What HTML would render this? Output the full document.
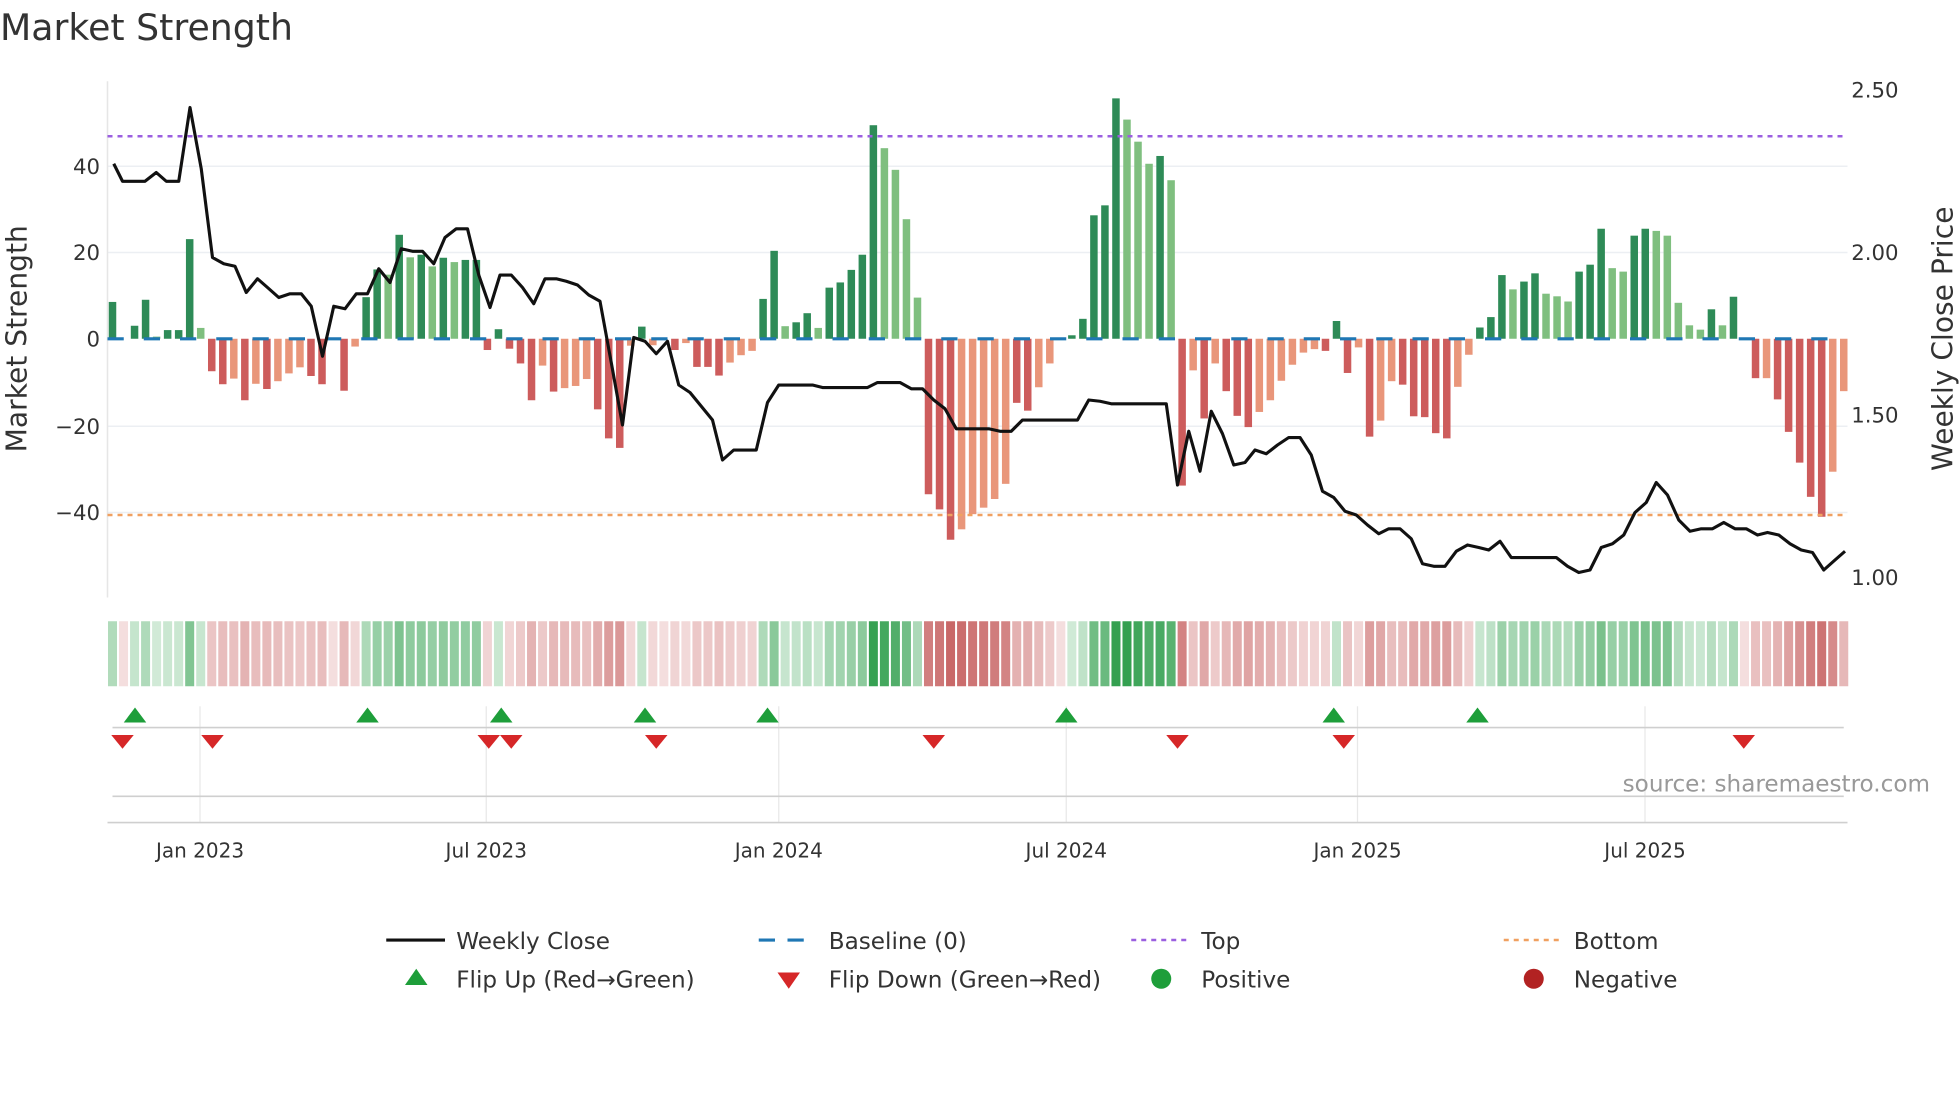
<!DOCTYPE html>
<html><head><meta charset="utf-8"><style>
html,body{margin:0;padding:0;background:#fff;}
svg{display:block;font-family:"DejaVu Sans","Liberation Sans",sans-serif;}
</style></head><body>
<svg id="s" width="1960" height="1102" viewBox="0 0 1568 881.6" xmlns="http://www.w3.org/2000/svg">
<rect width="1568" height="881.6" fill="#fff"/>
<text x="0" y="32" font-size="29" fill="#333">Market Strength</text>
<g stroke="#eceff3" stroke-width="1.2">
<line x1="86" x2="1478" y1="133" y2="133"/><line x1="86" x2="1478" y1="202" y2="202"/>
<line x1="86" x2="1478" y1="341" y2="341"/><line x1="86" x2="1478" y1="410" y2="410"/>
</g>
<line x1="86" x2="86" y1="65" y2="478" stroke="#e6e6e6" stroke-width="1.2"/>
<g font-size="17" fill="#333" text-anchor="end">
<text x="80" y="139">40</text><text x="80" y="208">20</text><text x="80" y="277">0</text>
<text x="80" y="347">−20</text><text x="80" y="416">−40</text>
</g>
<g font-size="17" fill="#333">
<text x="1481" y="78">2.50</text><text x="1481" y="208">2.00</text><text x="1481" y="338">1.50</text><text x="1481" y="468">1.00</text>
</g>
<text transform="translate(21,271) rotate(-90)" font-size="22.5" fill="#333" text-anchor="middle">Market Strength</text>
<text transform="translate(1562,271) rotate(-90)" font-size="22.5" fill="#333" text-anchor="middle">Weekly Close Price</text>
<g id="bars"></g>
<line x1="86" x2="1478" y1="109" y2="109" stroke="#9b5fe0" stroke-width="2" stroke-dasharray="4,4"/>
<line x1="86" x2="1478" y1="412" y2="412" stroke="#f0a060" stroke-width="2" stroke-dasharray="4,4"/>
<line x1="86" x2="1478" y1="271" y2="271" stroke="#1f77b4" stroke-width="2.5" stroke-dasharray="13,16"/>
<polyline id="price" fill="none" stroke="#111" stroke-width="2.5" stroke-linejoin="round"/>
<g id="heat"></g>
<g stroke="#e8e8e8" stroke-width="1">
<line x1="160" x2="160" y1="565" y2="658"/><line x1="389" x2="389" y1="565" y2="658"/>
<line x1="623" x2="623" y1="565" y2="658"/><line x1="853" x2="853" y1="565" y2="658"/>
<line x1="1086" x2="1086" y1="565" y2="658"/><line x1="1316" x2="1316" y1="565" y2="658"/>
</g>
<line x1="90" x2="1475" y1="582" y2="582" stroke="#cfcfcf" stroke-width="1.3"/>
<line x1="90" x2="1475" y1="637" y2="637" stroke="#cfcfcf" stroke-width="1.3"/>
<line x1="86" x2="1478" y1="658" y2="658" stroke="#cfcfcf" stroke-width="1.3"/>
<g id="flips"></g>
<text x="1544" y="633" font-size="18.5" fill="#999" text-anchor="end">source: sharemaestro.com</text>
<g font-size="16" fill="#333" text-anchor="middle">
<text x="160" y="686">Jan 2023</text><text x="389" y="686">Jul 2023</text><text x="623" y="686">Jan 2024</text>
<text x="853" y="686">Jul 2024</text><text x="1086" y="686">Jan 2025</text><text x="1316" y="686">Jul 2025</text>
</g>
<g font-size="18.5" fill="#333">
<line x1="309" x2="356" y1="752" y2="752" stroke="#111" stroke-width="2.5"/>
<text x="365" y="759">Weekly Close</text>
<line x1="607" x2="652" y1="752" y2="752" stroke="#1f77b4" stroke-width="2.5" stroke-dasharray="13,10"/>
<text x="663" y="759">Baseline (0)</text>
<line x1="905" x2="950" y1="752" y2="752" stroke="#9b5fe0" stroke-width="2" stroke-dasharray="4,4"/>
<text x="961" y="759">Top</text>
<line x1="1203" x2="1248" y1="752" y2="752" stroke="#f0a060" stroke-width="2" stroke-dasharray="4,4"/>
<text x="1259" y="759">Bottom</text>
<polygon points="324,788 342,788 333,775" fill="#1e9e3a"/>
<text x="365" y="790">Flip Up (Red→Green)</text>
<polygon points="622,778 640,778 631,791" fill="#d62728"/>
<text x="663" y="790">Flip Down (Green→Red)</text>
<circle cx="929" cy="783" r="8" fill="#1e9e3a"/>
<text x="961" y="790">Positive</text>
<circle cx="1227" cy="783" r="8" fill="#b22222"/>
<text x="1259" y="790">Negative</text>
</g>
</svg>
<script>
var D="8.5d 0d 3d 9d 0.5l 2d 2d 23d 2.5l -7.5d -10.5d -9.2l -14.2d -10.4l -11.6d -9.8l -8l -6.6l -8.6d -10.5d 0d -12d -1.8l 9.6d 16d 14.8l 24d 18.8l 19.4d 16.7l 18.7d 17.7l 18.2d 18.2d -2.6d 2.2d -2.3d -5.7d -14.2d -6.2l -12.2d -11.4l -10.9l -9.3l -16.3d -23d -25.2d -1.6l 2.8d -1.5l 0d -2.6d -1l -6.5d -6.5d -8.5d -5.5l -3.8l -2.8l 9.2d 20.3d 2.9l 3.8d 5.9d 2.5l 11.8d 13d 15.9d 19.4d 49.3d 44l 39l 27.6l 9.5l -35.9d -39.4d -46.4d -44l -40.5l -39l -37l -33.5l -14.8d -16.6d -11.2l -5.7l 0d 0.8d 4.6d 28.5d 30.8d 55.5d 50.6l 45.5l 40.4l 42.2d 36.6l -33.9d -7.3l -18.4d -5.7l -12.1d -17.8d -20.4d -16.9l -14.2l -9.7l -6l -3.2l -2.4l -2.8d 4.1d -7.9d -2l -22.6d -18.9l -9.8l -10.6d -17.9d -18.1d -21.8d -23d -11.1l -3.7l 2.6d 5d 14.7d 11.4l 13.2d 15.1d 10.4l 9.8l 8.6l 15.5d 17.1d 25.4d 16.3l 15.5l 23.8d 25.4d 24.9l 23.8l 8.3l 3.1l 2.1l 6.8d 3.1l 9.7d 0d -9.1d -9.1l -14d -21.5d -28.6d -36.5d -41.1d -30.7l -12.1l".split(" ");
var n=D.length,step=(1475-90)/(n-1),ns="http://www.w3.org/2000/svg";
var bars=document.getElementById("bars"),heat=document.getElementById("heat");
function el(p,t,a){var e=document.createElementNS(ns,t);for(var k in a)e.setAttribute(k,a[k]);p.appendChild(e);return e;}
function mix(a,b,t){return "rgb("+a.map(function(v,i){return Math.round(v+(b[i]-v)*t)}).join(",")+")";}
for(var i=0;i<n;i++){
 var v=parseFloat(D[i]),d=D[i].slice(-1)=="d",x=90+i*step,h=Math.abs(v)*3.465;
 if(v!==0){
  var c=v>0?(d?"#2e8b57":"#7fbf7f"):(d?"#cd5c5c":"#e9967a");
  el(bars,"rect",{x:x-3,y:v>0?271-h:271,width:6,height:h,fill:c});
 }
 var t=Math.min(1,Math.pow(Math.abs(v)/50,0.85));
 var hc=v>0?mix([212,236,218],[52,160,80],t):mix([244,222,222],[198,96,96],t);
 el(heat,"rect",{x:x-3.6,y:497,width:7.2,height:52,fill:hc});
}
var P=[[91,131],[98,145],[116,145],[125,138],[133,145],[143,145],[152,86],[161,135],[170,206],[179,211],[188,213],[197,234],[206,223],[214,230],[223,238],[232,235],[241,235],[249,245],[258,285],[267,245],[276,247],[285,235],[294,235],[303,215],[312,226],[321,199],[330,201],[338,201],[347,211],[356,190],[365,183],[374,183],[383,220],[392,246],[400,220],[409,220],[418,230],[427,243],[436,223],[445,223],[453,225],[462,228],[471,236],[480,241],[489,290],[498,340],[507,270],[516,273],[525,283],[534,273],[543,308],[552,314],[561,325],[570,336],[578,368],[587,360],[596,360],[605,360],[614,322],[623,308],[632,308],[650,308],[658,310],[694,310],[702,306],[720,306],[729,311],[738,311],[747,320],[756,327],[765,343],[791,343],[800,345],[809,345],[818,336],[862,336],[871,320],[880,321],[889,323],[933,323],[942,388],[951,345],[960,377],[969,329],[978,347],[987,372],[996,370],[1004,360],[1013,363],[1022,356],[1031,350],[1040,350],[1049,364],[1058,393],[1067,398],[1076,409],[1085,412],[1094,420],[1103,427],[1111,423],[1120,423],[1129,431],[1138,451],[1147,453],[1156,453],[1165,441],[1174,436],[1183,438],[1191,440],[1200,433],[1209,446],[1245,446],[1254,453],[1263,458],[1272,456],[1281,438],[1290,435],[1299,428],[1308,410],[1317,402],[1325,386],[1334,396],[1343,416],[1352,425],[1361,423],[1370,423],[1379,418],[1388,423],[1397,423],[1406,428],[1414,426],[1423,428],[1432,435],[1441,440],[1450,442],[1459,456],[1468,448],[1476,441]];
document.getElementById("price").setAttribute("points",P.map(function(p){return p.join(",")}).join(" "));
var f=document.getElementById("flips");
[108,294,401,516,614,853,1067,1182].forEach(function(x){el(f,"polygon",{points:(x-9)+",578 "+(x+9)+",578 "+x+",566",fill:"#1e9e3a"});});
[98,170,391,409,525,747,942,1075,1395].forEach(function(x){el(f,"polygon",{points:(x-9)+",588 "+(x+9)+",588 "+x+",599",fill:"#d62728"});});
</script>
</body></html>
